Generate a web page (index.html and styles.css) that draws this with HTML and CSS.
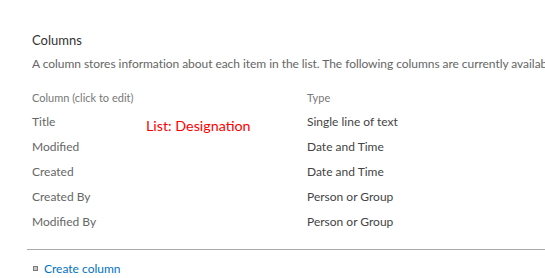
FILE: index.html
```html
<!DOCTYPE html>
<html lang="en">
<head>
<meta charset="utf-8">
<title>Columns</title>
<link rel="stylesheet" href="styles.css">
</head>
<body>
<div class="page">
  <div class="section">
    <h2 class="heading">Columns</h2>
    <p class="desc">A column stores information about each item in the list. The following columns are currently available in this list:</p>
    <div class="table">
      <div class="row head"><span>Column (click to edit)</span><span>Type</span></div>
      <div class="row"><a class="name">Title</a><span class="type">Single line of text</span><span class="note">List: Designation</span></div>
      <div class="row"><a class="name">Modified</a><span class="type">Date and Time</span></div>
      <div class="row"><a class="name">Created</a><span class="type">Date and Time</span></div>
      <div class="row"><a class="name">Created By</a><span class="type">Person or Group</span></div>
      <div class="row"><a class="name">Modified By</a><span class="type">Person or Group</span></div>
    </div>
  </div>
  <div class="divider"></div>
  <div class="section">
    <div class="action"><span class="bullet"></span><a class="link">Create column</a></div>
  </div>
</div>
</body>
</html>
```
FILE: styles.css
```css
html, body { margin: 0; padding: 0; background: #fff; }
body { font-family: Lato, "Open Sans", sans-serif; overflow: hidden; }
.page { padding: 31px 0 0 27px; }
.section { padding-left: 5px; }
.heading { margin: 0; font-size: 13px; line-height: 18px; font-weight: 400; color: #333; }
.desc { margin: 6px 0 0; font-size: 12px; letter-spacing: -0.05px; line-height: 18px; color: #666; white-space: nowrap; overflow: hidden; }
.table { margin-top: 17px; }
.row { display: grid; grid-template-columns: 275px 1fr; position: relative; font-size: 12px; line-height: 25px; height: 25px; }
.row.head { font-size: 11px; line-height: 16px; height: 16px; color: #777; margin-bottom: 3px; }
.name { color: #666; }
.type { color: #444; }
.note { position: absolute; left: 114px; top: 4px; color: #f00; font-size: 14.3px; }
.divider { height: 1px; background: #a9a9a9; margin-top: 15px; }
.action { margin-top: 11px; display: flex; align-items: center; font-size: 12px; line-height: 16px; }
.bullet { width: 3px; height: 3px; border: 1px solid #7a7a7a; background: #c8c8c8; margin: -2px 6px 0 1px; }
.link { color: #0072c6; }
```
